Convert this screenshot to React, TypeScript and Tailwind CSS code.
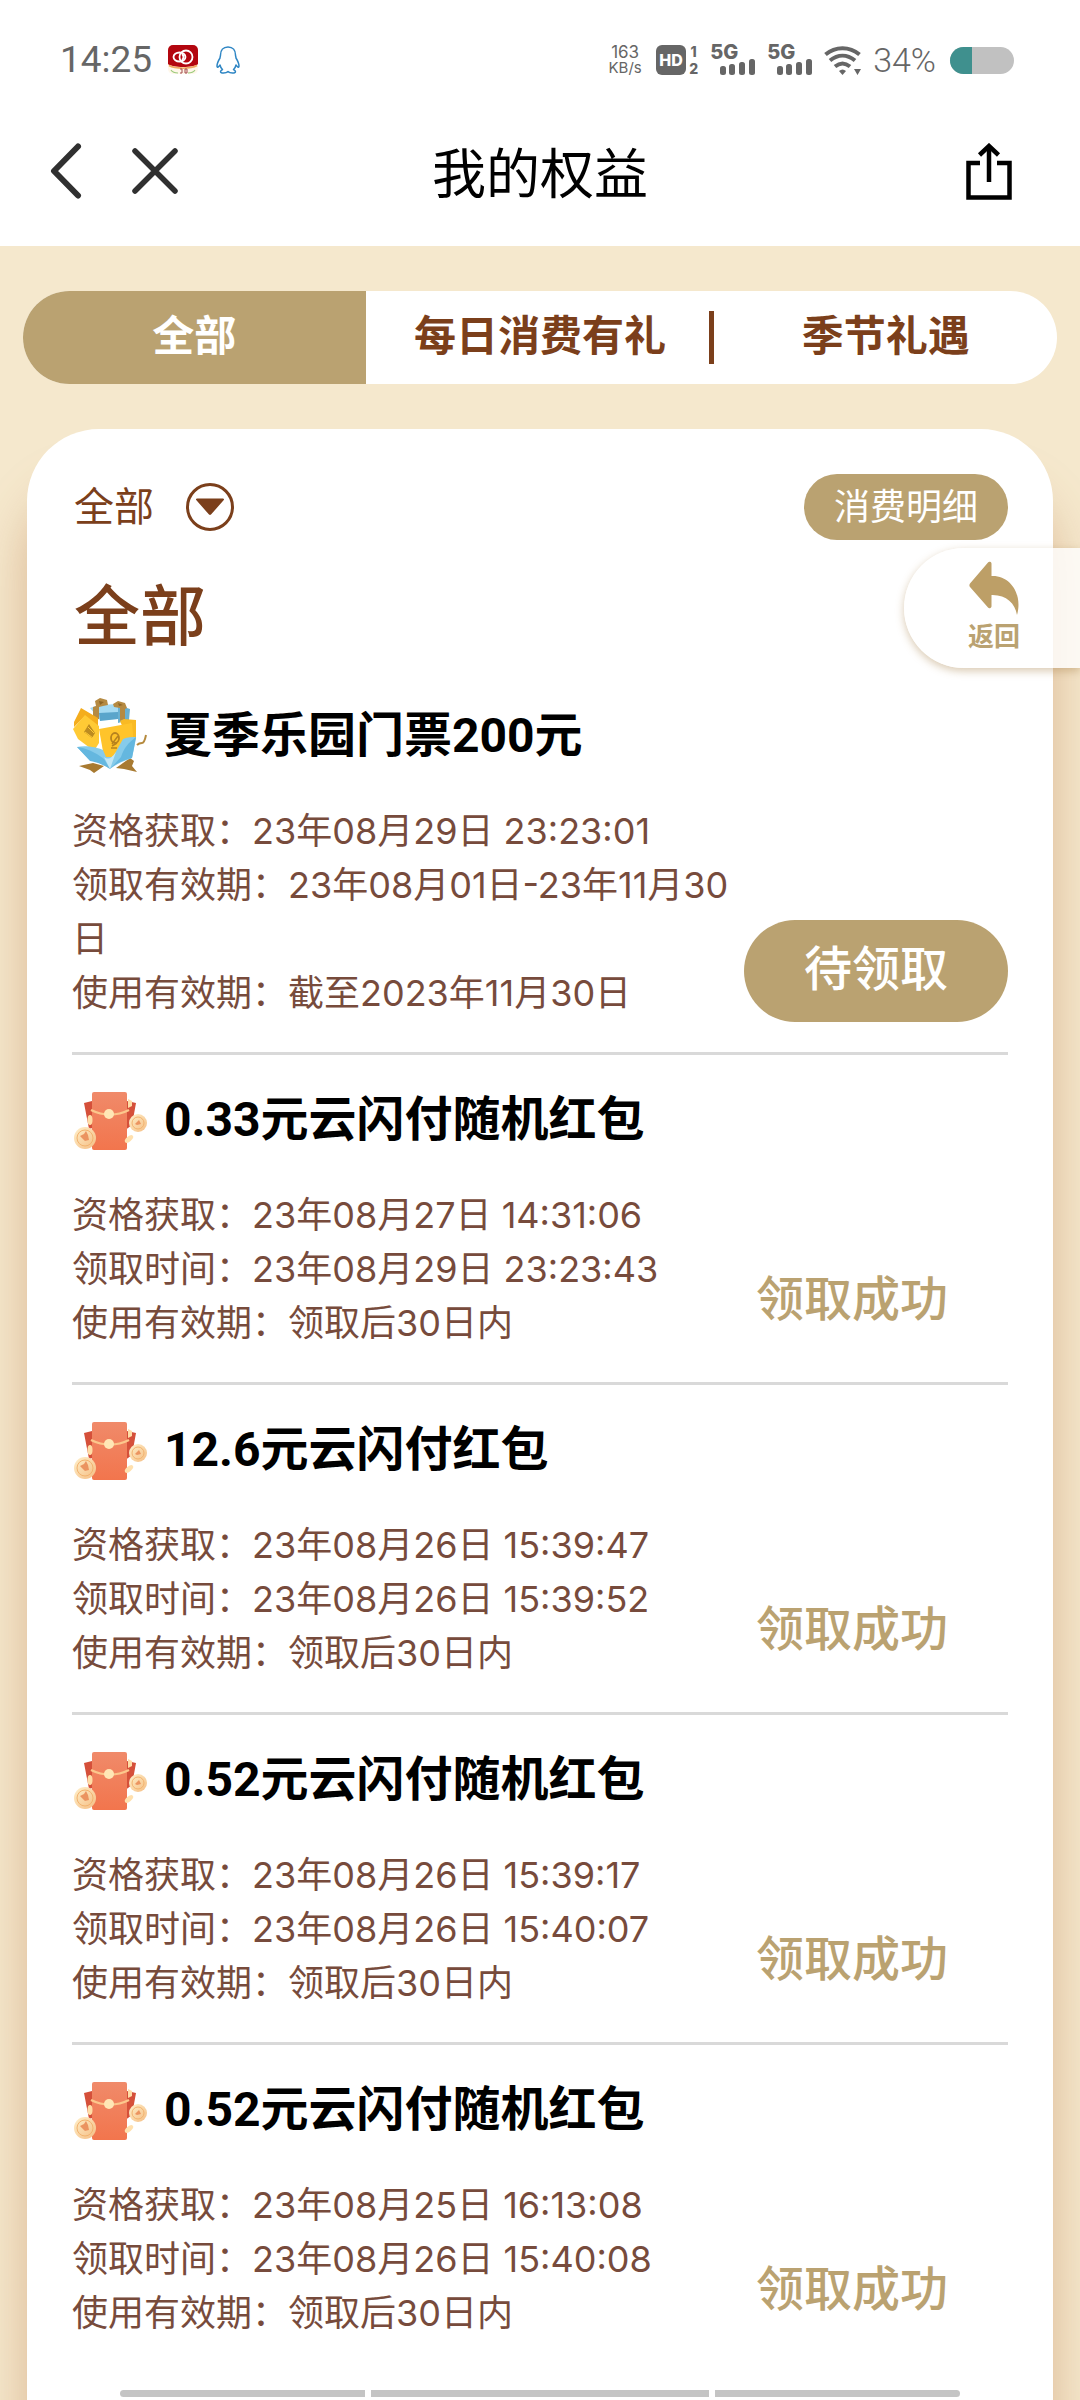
import { useState } from "react";

type RewardKind = "gift" | "redPacket";

interface Reward {
  id: number;
  kind: RewardKind;
  title: string;
  lines: string[];
  claimed: boolean;
}

const TABS = ["全部", "每日消费有礼", "季节礼遇"];

const REWARDS: Reward[] = [
  {
    id: 1,
    kind: "gift",
    title: "夏季乐园门票200元",
    lines: [
      "资格获取：23年08月29日 23:23:01",
      "领取有效期：23年08月01日-23年11月30日",
      "使用有效期：截至2023年11月30日",
    ],
    claimed: false,
  },
  {
    id: 2,
    kind: "redPacket",
    title: "0.33元云闪付随机红包",
    lines: [
      "资格获取：23年08月27日 14:31:06",
      "领取时间：23年08月29日 23:23:43",
      "使用有效期：领取后30日内",
    ],
    claimed: true,
  },
  {
    id: 3,
    kind: "redPacket",
    title: "12.6元云闪付红包",
    lines: [
      "资格获取：23年08月26日 15:39:47",
      "领取时间：23年08月26日 15:39:52",
      "使用有效期：领取后30日内",
    ],
    claimed: true,
  },
  {
    id: 4,
    kind: "redPacket",
    title: "0.52元云闪付随机红包",
    lines: [
      "资格获取：23年08月26日 15:39:17",
      "领取时间：23年08月26日 15:40:07",
      "使用有效期：领取后30日内",
    ],
    claimed: true,
  },
  {
    id: 5,
    kind: "redPacket",
    title: "0.52元云闪付随机红包",
    lines: [
      "资格获取：23年08月25日 16:13:08",
      "领取时间：23年08月26日 15:40:08",
      "使用有效期：领取后30日内",
    ],
    claimed: true,
  },
];

/* ---------- icons ---------- */

function BankAppIcon() {
  return (
    <svg viewBox="0 0 30 30" className="size-[30px]" aria-hidden="true">
      <rect x="0" y="0" width="30" height="29" rx="5" fill="#fff7ea" />
      <path d="M5 0h20a5 5 0 0 1 5 5v14c-4 4-26 4-30 0V5a5 5 0 0 1 5-5z" fill="#b3060f" />
      <path d="M1 20.500c6 3.500 22 3.500 28 0" fill="none" stroke="#f0a860" strokeWidth="1.500" />
      <g fill="none" stroke="#fff" strokeWidth="1.800">
        <ellipse cx="11.500" cy="12" rx="6" ry="4.500" />
        <circle cx="18" cy="12" r="6.500" />
        <path d="M14 9c2 2 2 4 0 6" />
      </g>
      <path d="M3 25c2 3 5 3 7 3M27 25c-2 3-5 3-7 3" fill="none" stroke="#9ccb7c" strokeWidth="1.200" />
      <path d="M12 24h2v4h-2M17 24h2v4h-2z" fill="none" stroke="#a2494b" />
    </svg>
  );
}

function PenguinIcon() {
  return (
    <svg viewBox="0 0 24 28" className="h-7 w-6" aria-hidden="true">
      <path
        d="M12 1C7 1 4.500 4.500 4.500 9c0 1-.5 2-.5 3-1.500 2.500-3 5.500-3 8 0 1 .6 1.500 1.200 1 .8-.5 1.300-1.500 1.800-2 .4 2 1.300 3.500 2.500 4.500-1.500.8-2 1.500-2 2.300 0 1.600 5.500 1.600 7.500-.3 2 1.900 7.500 1.900 7.500.3 0-.8-.5-1.500-2-2.300 1.200-1 2.100-2.500 2.500-4.500.5.500 1 1.500 1.800 2 .6.500 1.200 0 1.200-1 0-2.500-1.500-5.500-3-8 0-1-.5-2-.5-3C19.500 4.500 17 1 12 1z"
        fill="none"
        stroke="#2f86c4"
        strokeWidth="1.500"
        strokeLinejoin="round"
      />
    </svg>
  );
}

function SignalIcon() {
  return (
    <div className="relative h-[30px] w-[46px] text-[#666]">
      <span className="absolute top-0 left-0 text-[20px] leading-[15px] font-extrabold">5G</span>
      <svg viewBox="0 0 46 30" className="size-full" fill="currentColor" aria-hidden="true">
        <rect x="10" y="21" width="6" height="9" rx="2.500" />
        <rect x="19" y="19" width="6" height="11" rx="2.500" />
        <rect x="29" y="17" width="6" height="13" rx="2.500" />
        <rect x="39" y="14" width="6" height="16" rx="2.500" />
      </svg>
    </div>
  );
}

function WifiIcon() {
  return (
    <svg viewBox="0 0 38 30" className="h-[30px] w-[38px]" aria-hidden="true">
      <g fill="none" stroke="#666" strokeWidth="4">
        <path d="M1.500 9.500c10-8.500 24-8.500 34 0" />
        <path d="M6 15.500c8-6.500 17-6.500 25 0" />
        <path d="M11 21.500c5-4 10-4 15 0" />
      </g>
      <path d="M15 26q3.500-3 7 0L18.500 30zM30 24h7l-3.500 6z" fill="#666" />
    </svg>
  );
}

function ShareIcon() {
  return (
    <svg viewBox="0 0 46 57" className="h-[57px] w-[46px]" fill="none" stroke="#000" strokeWidth="4.500" aria-hidden="true">
      <path d="M14 20H2.500v34.500h41V20H31M23 39V3" />
      <path d="M13.500 12L23 3l9.500 9" />
    </svg>
  );
}

function GiftIcon() {
  return (
    <svg viewBox="0 0 76 76" className="size-[76px]" aria-hidden="true">
      {/* lid and ribbon */}
      <path d="M46 7l12 4-1 11-11 3z" fill="#69b0d2" />
      <path d="M18 10l9-3 19-1v15l-18 1z" fill="#a5daf2" />
      <path d="M27 15l19-1v7l-18 2z" fill="#5aa5cb" />
      <path d="M23 3l5-3 7 2 1 5-5 1-4 1v12l-6 2V9l3-1zM41 6l5-3 7 2 2 5-2 1v10l-5 2V10l-6-1z" fill="#b58a42" />
      <path d="M27 3l5 1-4 3zM46 5l5 2-4 1z" fill="#8e6525" />
      {/* tickets */}
      <path d="M9 10l17 10v9L13 18 2 29v-5z" fill="#f4ad1d" />
      <path d="M1 31l12-14 14 11v17l-5 8L6 41z" fill="#ffca35" />
      <path d="M48 23l4-2 12 1v19l-6 5z" fill="#f9ba24" />
      <path d="M27 31l33-6 2 23-22 11h-8z" fill="#ffc42b" />
      <path d="M17 26l6 9-3 5-8-6z" fill="#bd8b20" />
      <path d="M13 34l8 6M16 29l6 6" stroke="#ffca35" strokeWidth="1" />
      <ellipse cx="43" cy="40" rx="4" ry="5" fill="none" stroke="#b7821e" strokeWidth="1.800" />
      <path d="M40 46l6-8M40 48l5-3M39 50h6" stroke="#b7821e" strokeWidth="1.500" />
      {/* feet and wrapping */}
      <path d="M7 68l14-3 11 3-10 7-4-3zM44 70l14-10 4 3-2 5 5 6-13-3z" fill="#a87a31" />
      <path d="M5 49c8-2 20 0 26 3l3 7h7l10-18c5-2 9-2 13-2-1 8-3 16-4 21-8 3-16 6-22 11-6-5-13-7-20-9z" fill="#86cbea" />
      <path d="M5 49c9 1 18 5 27 12l6 10c-6-4-13-7-20-8zM64 39c-8 6-12 11-15 20l-11 12c6-6 14-9 22-11z" fill="#64b7df" />
      <path d="M32 59c4 3 7 2 12-5l-6 17z" fill="#c2e7f6" />
      <path d="M74 37c-1 5-2 8-4 8s-3 0-5 2" fill="none" stroke="#b58a3e" strokeWidth="2" />
    </svg>
  );
}

function RedPacketIcon() {
  return (
    <svg viewBox="0 -3 76 64" className="h-16 w-[76px]" aria-hidden="true">
      <defs>
        <linearGradient id="packet" x1="0" y1="0" x2="0" y2="1">
          <stop offset="0" stopColor="#f08a6a" />
          <stop offset="1" stopColor="#f2754d" />
        </linearGradient>
        <linearGradient id="coin" x1="0" y1="0" x2="1" y2="1">
          <stop offset="0" stopColor="#fff0ca" />
          <stop offset="1" stopColor="#f5bd83" />
        </linearGradient>
      </defs>
      <path d="M12 12l8-2 4 26-7 2zM64 12l-9-2-3 30 8-6z" fill="#d5503a" />
      <rect x="20" y="1" width="35" height="58" rx="2" fill="url(#packet)" />
      <path d="M19 19c12 6 26 6 38 0" fill="none" stroke="#fcc78c" strokeWidth="2.500" />
      <circle cx="37" cy="23" r="5" fill="#ffe6b5" />
      <ellipse cx="18" cy="29" rx="2.500" ry="5" fill="#ffdda6" />
      <ellipse cx="57" cy="48" rx="5" ry="2.500" fill="#ffe0ae" transform="rotate(-40 57 48)" />
      <path d="M56 8l4 2v5l-4 2z" fill="#ffdda6" />
      <circle cx="13" cy="47" r="11" fill="url(#coin)" />
      <circle cx="13" cy="47" r="8" fill="none" stroke="#f2b36f" />
      <path d="M8 45l4-2 2-3 2 4 1 5-4 1z" fill="#eb9460" />
      <circle cx="66" cy="32" r="9" fill="url(#coin)" />
      <circle cx="66" cy="32" r="6" fill="none" stroke="#f2b36f" />
      <path d="M63 33l4-4 2 4-4 1z" fill="#eb9460" />
    </svg>
  );
}

/* ---------- sections ---------- */

function StatusBar() {
  return (
    <div className="flex h-[100px] items-center justify-between pt-5 pr-[66px] pl-[60px] text-[#666]">
      <div className="flex items-center">
        <span className="font-[Roboto,sans-serif] text-[37px] leading-10">14:25</span>
        <span className="ml-4 flex items-center gap-[18px]">
          <BankAppIcon />
          <PenguinIcon />
        </span>
      </div>
      <div className="flex items-center font-[Inter,sans-serif]">
        <span className="flex w-[34px] flex-col items-center text-[17px] leading-4">
          <span>163</span>
          <span className="text-[15px]">KB/s</span>
        </span>
        <span className="ml-[14px] flex h-[30px] w-[30px] items-center justify-center rounded-md bg-[#666] text-[16px] font-extrabold text-white">
          HD
        </span>
        <span className="ml-[2px] flex w-[11px] flex-col items-center text-[14px] leading-[17px] font-extrabold">
          <span>1</span>
          <span>2</span>
        </span>
        <span className="ml-[11px] flex items-center gap-[11px]">
          <SignalIcon />
          <SignalIcon />
        </span>
        <span className="ml-[11px]">
          <WifiIcon />
        </span>
        <span className="ml-[11px] font-[Roboto,sans-serif] text-[34px] leading-8 font-light">34%</span>
        <span className="ml-[14px] flex h-[27px] w-16 overflow-hidden rounded-full bg-[#c1c1c1]">
          <span className="w-[22px] bg-[#3f908e]" />
        </span>
      </div>
    </div>
  );
}

function NavBar() {
  return (
    <header className="grid h-[146px] grid-cols-3 items-center px-[50px] pb-1">
      <div className="flex items-center gap-[50px]">
        <button type="button" aria-label="返回上一页">
          <svg viewBox="0 0 32 56" className="h-14 w-8" fill="none" stroke="#303030" strokeWidth="6" strokeLinecap="round" strokeLinejoin="round">
            <path d="M28 3.500L4 28l24 24.500" />
          </svg>
        </button>
        <button type="button" aria-label="关闭">
          <svg viewBox="0 0 46 46" className="size-[46px]" fill="none" stroke="#303030" strokeWidth="5.500" strokeLinecap="round">
            <path d="M3 3l40 40M43 3L3 43" />
          </svg>
        </button>
      </div>
      <h1 className="pt-2 text-center text-[54px] leading-[72px] text-black">我的权益</h1>
      <button type="button" aria-label="分享" className="mr-[18px] justify-self-end">
        <ShareIcon />
      </button>
    </header>
  );
}

function RewardItem({ reward }: { reward: Reward }) {
  return (
    <li className="border-b-[3px] border-[#d9d9d9] pt-[29px] pb-[30px] last:border-b-0">
      <div className="flex h-[72px] items-center gap-4">
        {reward.kind === "gift" ? <GiftIcon /> : <RedPacketIcon />}
        <h3 className="font-[Roboto,'Noto_Sans_CJK_SC',sans-serif] text-[48px] leading-[72px] font-bold text-black">
          {reward.title}
        </h3>
      </div>
      <div className="mt-8 flex items-end">
        <div className="flex-1 pb-[2px] text-[36px] leading-[54px] text-[#774b3c]">
          {reward.lines.map((line) => (
            <p key={line}>{line}</p>
          ))}
        </div>
        {reward.claimed ? (
          <span className="h-[102px] w-[264px] pl-3 text-[48px] leading-[98px] font-medium text-[#baa271]">
            领取成功
          </span>
        ) : (
          <button
            type="button"
            className="h-[102px] w-[264px] rounded-full bg-[#baa271] pb-1 text-[48px] leading-[96px] font-medium text-white"
          >
            待领取
          </button>
        )}
      </div>
    </li>
  );
}

export default function App() {
  const [tab, setTab] = useState(0);

  return (
    <div className="flex min-h-screen flex-col overflow-hidden bg-white font-[Inter,'Noto_Sans_CJK_SC',sans-serif]">
      <StatusBar />
      <NavBar />

      <main className="relative flex flex-1 flex-col bg-[#f5e8cd] pt-[45px]">
        <nav className="mx-[23px] grid h-[93px] grid-cols-[343fr_349fr_343fr] overflow-hidden rounded-full bg-white">
          {TABS.map((label, i) => (
            <button
              key={label}
              type="button"
              onClick={() => setTab(i)}
              className={`relative pb-1 text-[42px] leading-[60px] font-bold ${
                tab === i ? "bg-[#baa271] text-white" : "text-[#7b3f1b]"
              }`}
            >
              {label}
              {i === 1 && (
                <span className="absolute top-5 right-0 h-[53px] w-[5px] bg-[#7b3f1b]" />
              )}
            </button>
          ))}
        </nav>

        <section className="mx-[27px] mt-[45px] flex-1 rounded-t-[72px] bg-white px-[45px] pt-[45px] shadow-[0_60px_50px_rgba(180,110,60,0.4)]">
          <div className="flex h-[66px] items-center justify-between">
            <button type="button" className="flex items-center gap-8 pl-[2px] text-[40px] leading-[60px] text-[#7b3f1b]">
              全部
              <svg viewBox="0 0 48 48" className="size-12" aria-hidden="true">
                <circle cx="24" cy="24" r="22.500" fill="none" stroke="#7b3f1b" strokeWidth="3" />
                <path d="M11 15.500h26a1 1 0 0 1 .8 1.600L25 31.500a1.500 1.500 0 0 1-2 0L10.200 17.100a1 1 0 0 1 .8-1.600z" fill="#7b3f1b" />
              </svg>
            </button>
            <button
              type="button"
              className="h-[66px] w-[204px] rounded-full bg-[#baa271] text-[36px] leading-[60px] text-white"
            >
              消费明细
            </button>
          </div>

          <h2 className="mt-7 pl-[2px] text-[66px] leading-[96px] font-medium text-[#7b3f1b]">全部</h2>

          <ul className="mt-[7px]">
            {REWARDS.map((reward) => (
              <RewardItem key={reward.id} reward={reward} />
            ))}
          </ul>
        </section>

        {/* floating return handle, docked to the right edge */}
        <button
          type="button"
          className="absolute top-[302px] right-0 flex h-[120px] w-44 flex-col items-center gap-1 rounded-l-full bg-white/80 pt-[13px] pl-1 text-[26px] leading-9 font-bold text-[#baa271] shadow-[0_3px_8px_rgba(160,120,60,0.4)]"
        >
          <svg viewBox="0 0 51 54" className="h-[54px] w-[51px]" fill="#bd9f67" aria-hidden="true">
            <path d="M19 1.500a2 2 0 0 1 3.500 1V15C41 14 54 33 48 54 46 42 37 33.500 22.500 34v11.500a2 2 0 0 1-3.500 1L1 26a3 3 0 0 1 0-3.500z" />
          </svg>
          返回
        </button>
      </main>

      {/* system gesture bar */}
      <div className="fixed inset-x-[120px] bottom-[3px] flex h-[7px] gap-[6px] overflow-hidden rounded-full">
        <span className="w-[245px] bg-[#c4c4c4]" />
        <span className="flex-1 bg-[#c4c4c4]" />
        <span className="w-[245px] bg-[#c4c4c4]" />
      </div>
    </div>
  );
}
